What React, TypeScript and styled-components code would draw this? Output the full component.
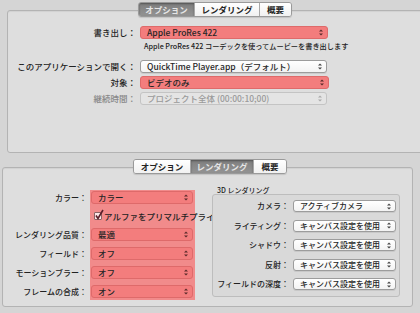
import React from 'react';
import styled, { createGlobalStyle } from 'styled-components';

const GlobalStyle = createGlobalStyle`
  html, body {
    margin: 0;
    padding: 0;
    background: #d5d5d5;
    overflow: hidden;
  }
  body {
    font-family: "Noto Sans CJK JP", "Liberation Sans", sans-serif;
    color: #222;
  }
`;

const Page = styled.div`
  width: 420px;
  height: 313px;
  display: flex;
  flex-direction: column;
  overflow: hidden;
`;

const Section = styled.section<{ $tabLeft: number; $top: number }>`
  display: flex;
  flex-direction: column;
  padding-top: ${(p) => p.$top}px;
  padding-left: ${(p) => p.$tabLeft}px;
`;

const TabBar = styled.div`
  display: flex;
  height: 13px;
  border: 1px solid #9a9a9a;
  border-radius: 3px;
  overflow: hidden;
  align-self: flex-start;
  position: relative;
  z-index: 1;
  box-shadow: 0 1px 1px rgba(0, 0, 0, 0.12);
`;

const Tab = styled.div<{ $w: number; $active?: boolean }>`
  width: ${(p) => p.$w}px;
  display: flex;
  align-items: center;
  justify-content: center;
  font-size: 8.5px;
  font-weight: 700;
  line-height: 1;
  color: ${(p) => (p.$active ? '#e6e6e6' : '#222')};
  background: ${(p) =>
    p.$active ? 'linear-gradient(#7e7e7e, #939393)' : 'linear-gradient(#ffffff, #f1f1f1)'};
  box-shadow: ${(p) => (p.$active ? 'inset 0 1px 2px rgba(0,0,0,0.35)' : 'none')};
  & + & {
    border-left: 1px solid #a8a8a8;
  }
`;

const Box = styled.div<{ $left: number; $width: number; $height: number }>`
  margin-top: -7px;
  margin-left: ${(p) => p.$left}px;
  width: ${(p) => p.$width}px;
  height: ${(p) => p.$height}px;
  box-sizing: border-box;
  border: 1px solid #b3b3b3;
  border-radius: 3px;
  background: #dedede;
  box-shadow: inset 0 1px 1px rgba(0, 0, 0, 0.06);
`;

/* top panel */

const TopForm = styled.div`
  display: flex;
  flex-direction: column;
  padding-top: 15px;
`;

const FormRow = styled.div<{ $mt?: number }>`
  display: flex;
  align-items: center;
  height: 13px;
  margin-top: ${(p) => p.$mt ?? 0}px;
`;

const Label = styled.div<{ $w: number; $dim?: boolean; $size?: number }>`
  width: ${(p) => p.$w}px;
  flex: none;
  text-align: right;
  font-size: ${(p) => p.$size ?? 8.5}px;
  font-weight: 500;
  line-height: 1;
  white-space: nowrap;
  color: ${(p) => (p.$dim ? '#888' : '#222')};
  padding-right: 4px;
  box-sizing: border-box;
`;

const Description = styled.div`
  margin-left: 136px;
  margin-top: 2px;
  height: 10px;
  font-size: 7.2px;
  font-weight: 500;
  line-height: 10px;
  white-space: nowrap;
`;

type Tone = 'red' | 'white' | 'disabled';

const PopupShell = styled.div<{ $w: number; $h: number; $tone: Tone; $size: number }>`
  width: ${(p) => p.$w}px;
  height: ${(p) => p.$h}px;
  flex: none;
  box-sizing: border-box;
  display: flex;
  align-items: center;
  justify-content: space-between;
  padding: 0 4px 0 6px;
  border-radius: 3px;
  font-size: ${(p) => p.$size}px;
  font-weight: 500;
  line-height: 1;
  white-space: nowrap;
  border: 1px solid
    ${(p) => (p.$tone === 'red' ? '#de6a6a' : p.$tone === 'white' ? '#9c9c9c' : '#c4c4c4')};
  background: ${(p) =>
    p.$tone === 'red'
      ? '#f37d7d'
      : p.$tone === 'white'
      ? 'linear-gradient(#ffffff, #f3f3f3)'
      : '#e4e4e4'};
  color: ${(p) => (p.$tone === 'disabled' ? '#9a9a9a' : '#262626')};
  box-shadow: ${(p) => (p.$tone === 'white' ? '0 1px 0 rgba(0,0,0,0.08)' : 'none')};
`;

const Arrows = ({ color }: { color: string }) => (
  <svg width="4" height="7" viewBox="0 0 4 7">
    <path d="M0 2.6 L2 0.4 L4 2.6 Z M0 4.4 L2 6.6 L4 4.4 Z" fill={color} />
  </svg>
);

function Popup({
  w,
  h = 13,
  size = 8.5,
  tone = 'white',
  children,
}: {
  w: number;
  h?: number;
  size?: number;
  tone?: Tone;
  children: React.ReactNode;
}) {
  return (
    <PopupShell $w={w} $h={h} $tone={tone} $size={size}>
      <span>{children}</span>
      <Arrows color={tone === 'disabled' ? '#aaa' : tone === 'red' ? '#5a2a2a' : '#444'} />
    </PopupShell>
  );
}

/* bottom panel */

const RenderBody = styled.div`
  display: flex;
  padding-top: 18px;
`;

const LeftLabels = styled.div`
  width: 84px;
  padding-top: 5px;
  display: flex;
  flex-direction: column;
  gap: 6px;
`;

const LeftLabel = styled.div<{ $h?: number }>`
  height: ${(p) => p.$h ?? 13}px;
  display: flex;
  align-items: center;
  justify-content: flex-end;
  font-size: 8px;
  font-weight: 500;
  line-height: 1;
  white-space: nowrap;
`;

const RedColumn = styled.div`
  margin-left: 3px;
  margin-top: 4px;
  width: 105px;
  height: 110px;
  box-sizing: border-box;
  padding: 1px 2px 1px 1px;
  background: #f18b8b;
  display: flex;
  flex-direction: column;
  gap: 6px;
`;

const CheckRow = styled.div`
  height: 12px;
  display: flex;
  align-items: center;
  gap: 2px;
  padding-left: 3px;
  font-size: 8.5px;
  font-weight: 500;
  line-height: 1;
  white-space: nowrap;
`;

const CheckBox = styled.div`
  width: 8px;
  height: 8px;
  flex: none;
  box-sizing: border-box;
  border: 1px solid #8c6464;
  border-radius: 1px;
  background: #fbe6e6;
  position: relative;
  svg {
    position: absolute;
    left: -1px;
    top: -4px;
  }
`;

const RightColumn = styled.div`
  margin-left: 17px;
  display: flex;
  flex-direction: column;
`;

const GroupTitle = styled.div`
  height: 8px;
  font-size: 7px;
  font-weight: 500;
  line-height: 8px;
  padding-left: 5px;
  white-space: nowrap;
`;

const GroupBox = styled.div`
  width: 188px;
  height: 103px;
  box-sizing: border-box;
  border: 1px solid #bdbdbd;
  border-radius: 3px;
  background: #d9d9d9;
  padding-top: 5px;
  display: flex;
  flex-direction: column;
  gap: 7.5px;
`;

const GroupRow = styled.div`
  display: flex;
  align-items: center;
  height: 12px;
`;

const sceneRows = [
  ['カメラ：', 'アクティブカメラ'],
  ['ライティング：', 'キャンバス設定を使用'],
  ['シャドウ：', 'キャンバス設定を使用'],
  ['反射：', 'キャンバス設定を使用'],
  ['フィールドの深度：', 'キャンバス設定を使用'],
];

export default function App() {
  return (
    <Page>
      <GlobalStyle />
      <Section $tabLeft={138} $top={2}>
        <TabBar>
          <Tab $w={55} $active>
            オプション
          </Tab>
          <Tab $w={64}>レンダリング</Tab>
          <Tab $w={31}>概要</Tab>
        </TabBar>
      </Section>
      <Box $left={7} $width={430} $height={143}>
        <TopForm>
          <FormRow>
            <Label $w={132}>書き出し：</Label>
            <Popup w={188} tone="red">
              Apple ProRes 422
            </Popup>
          </FormRow>
          <Description>Apple ProRes 422 コーデックを使ってムービーを書き出します</Description>
          <FormRow $mt={9}>
            <Label $w={132}>このアプリケーションで開く：</Label>
            <Popup w={187}>QuickTime Player.app（デフォルト）</Popup>
          </FormRow>
          <FormRow $mt={3}>
            <Label $w={132}>対象：</Label>
            <Popup w={189} tone="red">
              ビデオのみ
            </Popup>
          </FormRow>
          <FormRow $mt={3}>
            <Label $w={132} $dim>
              継続時間：
            </Label>
            <Popup w={187} tone="disabled">
              プロジェクト全体 (00:00:10;00)
            </Popup>
          </FormRow>
        </TopForm>
      </Box>
      <Section $tabLeft={133} $top={6}>
        <TabBar>
          <Tab $w={56}>オプション</Tab>
          <Tab $w={62} $active>
            レンダリング
          </Tab>
          <Tab $w={32}>概要</Tab>
        </TabBar>
      </Section>
      <Box $left={2} $width={411} $height={140}>
        <RenderBody>
          <LeftLabels>
            <LeftLabel>カラー：</LeftLabel>
            <LeftLabel $h={12} />
            <LeftLabel>レンダリング品質：</LeftLabel>
            <LeftLabel>フィールド：</LeftLabel>
            <LeftLabel>モーションブラー：</LeftLabel>
            <LeftLabel>フレームの合成：</LeftLabel>
          </LeftLabels>
          <RedColumn>
            <Popup w={102} tone="red">
              カラー
            </Popup>
            <CheckRow>
              <CheckBox>
                <svg width="10" height="11" viewBox="0 0 10 11">
                  <path d="M2 6.5 L4 9.5 L9 1" stroke="#5a1f2a" strokeWidth="1.6" fill="none" />
                </svg>
              </CheckBox>
              アルファをプリマルチプライ
            </CheckRow>
            <Popup w={102} tone="red">
              最適
            </Popup>
            <Popup w={102} tone="red">
              オフ
            </Popup>
            <Popup w={102} tone="red">
              オフ
            </Popup>
            <Popup w={102} tone="red">
              オン
            </Popup>
          </RedColumn>
          <RightColumn>
            <GroupTitle>3D レンダリング</GroupTitle>
            <GroupBox>
              {sceneRows.map(([label, value]) => (
                <GroupRow key={label}>
                  <Label $w={80} $size={8}>
                    {label}
                  </Label>
                  <Popup w={103} h={12} size={8}>
                    {value}
                  </Popup>
                </GroupRow>
              ))}
            </GroupBox>
          </RightColumn>
        </RenderBody>
      </Box>
    </Page>
  );
}
